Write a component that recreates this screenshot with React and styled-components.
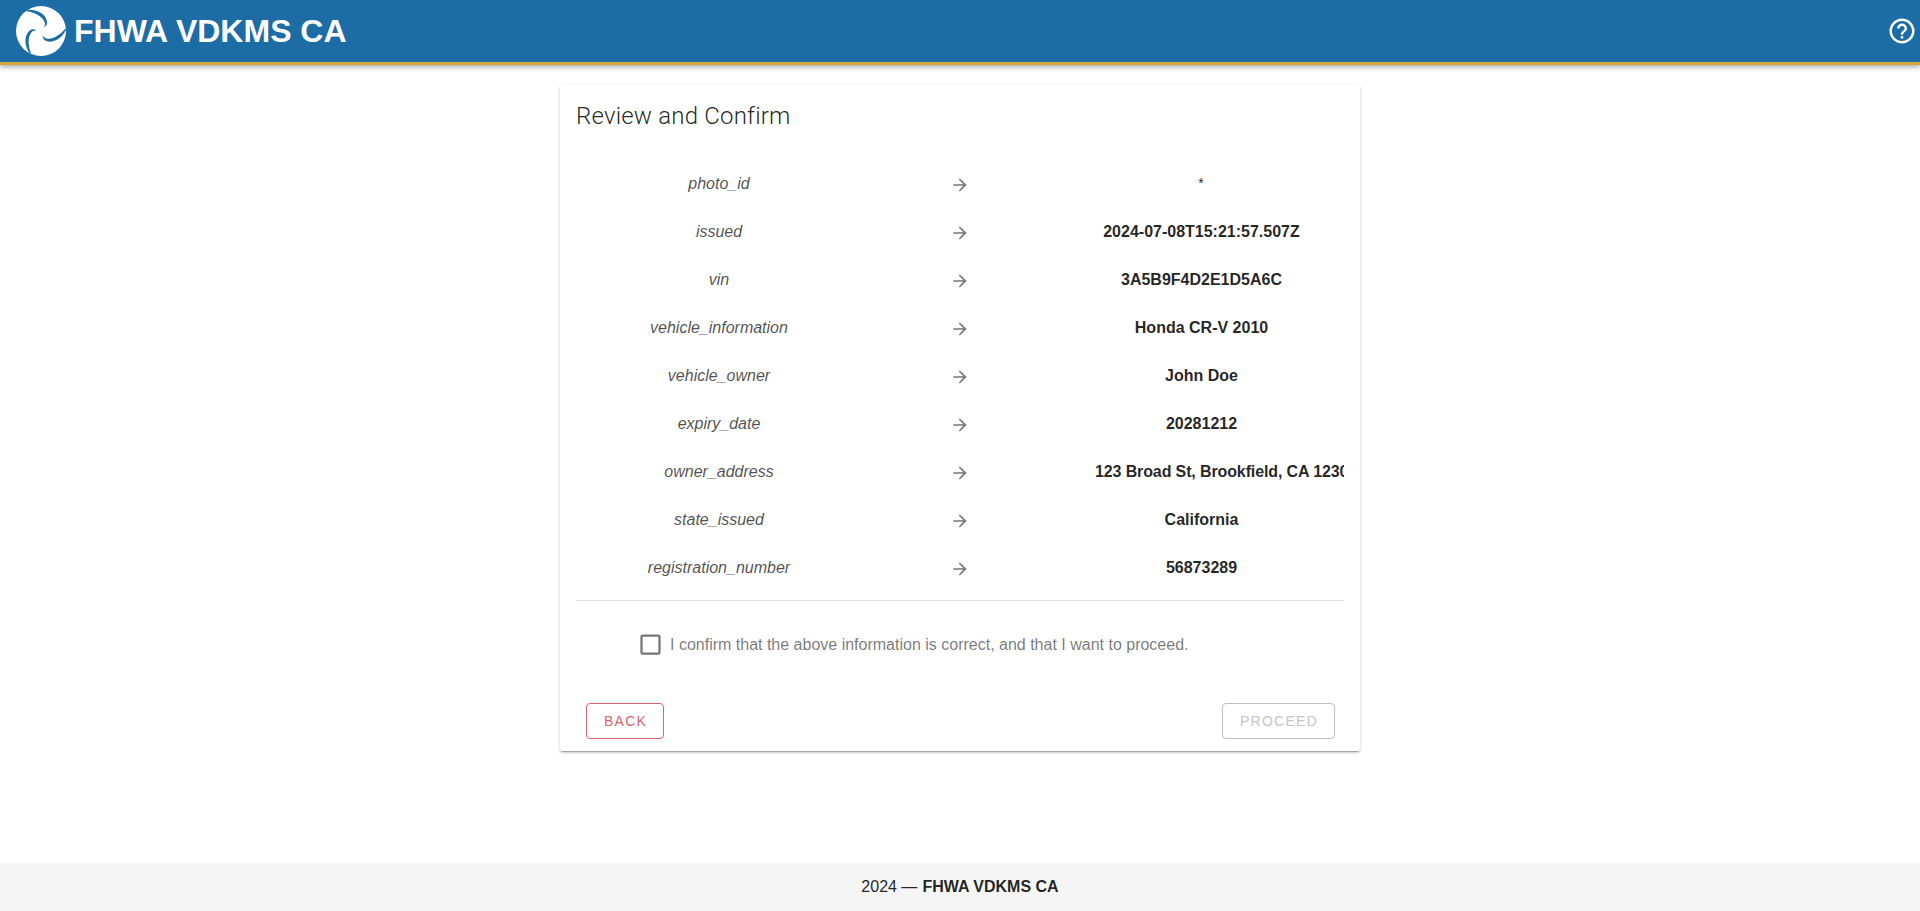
import React from "react";
import styled, { createGlobalStyle } from "styled-components";

const ARROW = "M4,11V13H16L10.5,18.5L11.92,19.92L19.84,12L11.92,4.08L10.5,5.5L16,11H4Z";
const HELP =
  "M11,18H13V16H11V18M12,2A10,10 0 0,0 2,12A10,10 0 0,0 12,22A10,10 0 0,0 22,12A10,10 0 0,0 12,2M12,20C7.59,20 4,16.41 4,12C4,7.59 7.59,4 12,4C16.41,4 20,7.59 20,12C20,16.41 16.41,20 12,20M12,6A4,4 0 0,0 8,10H10A2,2 0 0,1 12,8A2,2 0 0,1 14,10C14,12 11,11.75 11,15H13C13,12.75 16,12.5 16,10A4,4 0 0,0 12,6Z";
const BOX =
  "M19,3H5C3.89,3 3,3.89 3,5V19A2,2 0 0,0 5,21H19A2,2 0 0,0 21,19V5C21,3.89 20.1,3 19,3M19,5V19H5V5H19Z";

// review rows
const rows = [
  { key: "photo_id", value: "*", plain: true },
  { key: "issued", value: "2024-07-08T15:21:57.507Z" },
  { key: "vin", value: "3A5B9F4D2E1D5A6C" },
  { key: "vehicle_information", value: "Honda CR-V 2010" },
  { key: "vehicle_owner", value: "John Doe" },
  { key: "expiry_date", value: "20281212" },
  { key: "owner_address", value: "123 Broad St, Brookfield, CA 12307", clipped: true },
  { key: "state_issued", value: "California" },
  { key: "registration_number", value: "56873289" }
];

const GlobalStyle = createGlobalStyle`
  html, body {
    margin: 0;
    padding: 0;
    background: #fff;
    font-family: "Liberation Sans", Arial, sans-serif;
  }
`;

const Page = styled.div`
  display: flex;
  flex-direction: column;
  min-height: 911px;
`;

const Header = styled.header`
  display: flex;
  align-items: center;
  justify-content: space-between;
  height: 62px;
  padding: 0 3px 0 16px;
  background: #1c6ca6;
  border-bottom: 3px solid #d4a93f;
  box-shadow: 0 2px 5px rgba(0, 0, 0, 0.35);
  color: #fff;
`;

const Brand = styled.div`
  display: flex;
  align-items: center;
  gap: 8px;
  font-size: 32px;
  font-weight: 700;
`;

const Main = styled.main`
  flex: 1;
  display: flex;
  justify-content: center;
  align-items: flex-start;
  padding-top: 20px;
`;

const Card = styled.section`
  width: 800px;
  height: 666px;
  box-sizing: border-box;
  padding: 17px 16px 16px;
  background: #fff;
  border-radius: 2px;
  box-shadow: 0 2px 2px -1px rgba(0, 0, 0, 0.4), 0 1px 4px rgba(0, 0, 0, 0.14);
`;

const Title = styled.h2`
  margin: 0 0 29px;
  font-family: Roboto, sans-serif;
  font-size: 24px;
  font-weight: 300;
  letter-spacing: 0.2px;
  line-height: 28px;
  color: rgba(0, 0, 0, 0.87);
`;

const Row = styled.div`
  display: grid;
  grid-template-columns: 286px 196px 286px;
  align-items: center;
  height: 48px;
`;

const Key = styled.div`
  padding-top: 2px;
  text-align: center;
  font-style: italic;
  font-size: 16px;
  color: rgba(0, 0, 0, 0.7);
`;

const ArrowCell = styled.div`
  display: flex;
  justify-content: center;
  padding-top: 3px;
  color: rgba(0, 0, 0, 0.54);
`;

const Value = styled.div`
  overflow: hidden;
  white-space: nowrap;
  display: flex;
  justify-content: ${p => (p.$clipped ? "flex-start" : "center")};
  padding: ${p => (p.$plain ? "0" : "2px 0 0 1px")};
  padding-left: ${p => p.$clipped && "37px"};
  letter-spacing: ${p => (p.$clipped ? "-0.12px" : "normal")};
  font-size: ${p => (p.$plain ? "14px" : "16px")};
  font-weight: ${p => (p.$plain ? 400 : 700)};
  color: rgba(0, 0, 0, 0.87);
`;

const Divider = styled.hr`
  margin: 9px 0 0;
  border: 0;
  border-top: 1px solid #e0e0e0;
`;

const Confirm = styled.label`
  display: flex;
  align-items: center;
  gap: 6px;
  margin: 30px 0 0 61px;
  font-size: 16px;
  color: rgba(0, 0, 0, 0.54);
`;

const Actions = styled.div`
  display: flex;
  justify-content: space-between;
  margin: 45px 9px 0 10px;
`;

const Button = styled.button`
  height: 36px;
  padding: 0 16px 0 17px;
  background: transparent;
  border: 1px solid ${p => (p.disabled ? "#bdbdbd" : "#e0626b")};
  border-radius: 4px;
  font-family: "Liberation Sans", Arial, sans-serif;
  font-size: 14px;
  letter-spacing: 1.25px;
  text-transform: uppercase;
  color: ${p => (p.disabled ? "#c4c4c4" : "#e0626b")};
`;

const Footer = styled.footer`
  display: flex;
  align-items: center;
  justify-content: center;
  gap: 5px;
  height: 48px;
  background: #f5f5f5;
  font-size: 16px;
  color: rgba(0, 0, 0, 0.87);
  strong {
    font-weight: 700;
  }
`;

const Icon = ({ d, size = 24 }) => (
  <svg width={size} height={size} viewBox="0 0 24 24" fill="currentColor">
    <path d={d} />
  </svg>
);

// three swirl blades cut out of a white disc
const Logo = () => (
  <svg width="50" height="50" viewBox="-25 -25 50 50">
    <circle r="25" fill="#fff" />
    {[0, 120, 240].map(angle => (
      <path
        key={angle}
        transform={`rotate(${angle})`}
        d="M-14,-21 C-6,-22 4.5,-18 6,-9.5 C6.5,-7 5,-5 3,-3.5 C4,-5.5 4.2,-7 3.8,-8.5 C2,-14.5 -6,-18.5 -14,-19.8 Z"
        fill="#1c6ca6"
      />
    ))}
  </svg>
);

const App = () => (
  <Page>
    <GlobalStyle />
    <Header>
      <Brand>
        <Logo />
        FHWA VDKMS CA
      </Brand>
      <Icon d={HELP} size={30} />
    </Header>
    <Main>
      <Card>
        <Title>Review and Confirm</Title>
        {rows.map(({ key, value, plain, clipped }) => (
          <Row key={key}>
            <Key>{key}</Key>
            <ArrowCell>
              <Icon d={ARROW} size={20} />
            </ArrowCell>
            <Value $plain={plain} $clipped={clipped}>
              <span>{value}</span>
            </Value>
          </Row>
        ))}
        <Divider />
        <Confirm>
          <Icon d={BOX} size={27} />
          I confirm that the above information is correct, and that I want to proceed.
        </Confirm>
        <Actions>
          <Button>Back</Button>
          <Button disabled>Proceed</Button>
        </Actions>
      </Card>
    </Main>
    <Footer>
      2024 — <strong>FHWA VDKMS CA</strong>
    </Footer>
  </Page>
);

export default App;
